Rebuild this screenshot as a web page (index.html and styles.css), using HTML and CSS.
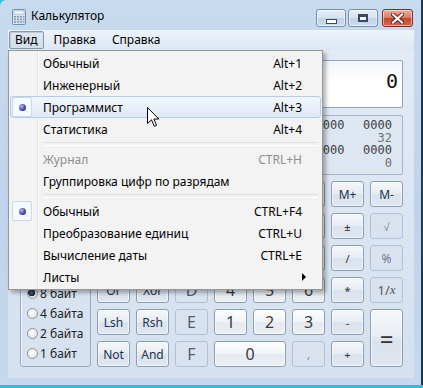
FILE: index.html
```html
<!DOCTYPE html>
<html lang="ru">
<head>
    <meta charset="UTF-8">
    <title>Калькулятор</title>
    <link rel="stylesheet" href="styles.css">
</head>
<body>
    <div class="window">
        <div class="titlebar">
            <svg class="app-icon" width="14" height="16" viewBox="0 0 14 16">
                <rect x="0.5" y="0.5" width="13" height="15" rx="1" fill="#d5e4f4" stroke="#6f8fb5"/>
                <rect x="2" y="2" width="10" height="3" fill="#fdfeff" stroke="#8ea7c6" stroke-width="0.6"/>
                <g fill="#8a98a8">
                    <rect x="2" y="7" width="2" height="1.6"/><rect x="5" y="7" width="2" height="1.6"/><rect x="8" y="7" width="2" height="1.6"/><rect x="11" y="7" width="1.5" height="1.6"/>
                    <rect x="2" y="9.6" width="2" height="1.6"/><rect x="5" y="9.6" width="2" height="1.6"/><rect x="8" y="9.6" width="2" height="1.6"/><rect x="11" y="9.6" width="1.5" height="1.6"/>
                    <rect x="2" y="12.2" width="2" height="1.6"/><rect x="5" y="12.2" width="2" height="1.6"/><rect x="8" y="12.2" width="2" height="1.6"/><rect x="11" y="12.2" width="1.5" height="1.6"/>
                </g>
            </svg>
            <span class="title">Калькулятор</span>
            <div class="caption">
                <div class="cap-btn"><span class="ico-min"></span></div>
                <div class="cap-btn"><span class="ico-max"></span></div>
                <div class="cap-btn close">
                    <svg width="13" height="11" viewBox="0 0 13 11">
                        <path d="M2 1.5 L11 9.5 M11 1.5 L2 9.5" stroke="#5a1d14" stroke-width="4" stroke-linecap="square"/>
                        <path d="M2 1.5 L11 9.5 M11 1.5 L2 9.5" stroke="#fff" stroke-width="2.2" stroke-linecap="square"/>
                    </svg>
                </div>
            </div>
        </div>

        <div class="menubar">
            <span class="menubar-item open">Вид</span>
            <span class="menubar-item">Правка</span>
            <span class="menubar-item">Справка</span>
        </div>

        <div class="client">
            <div class="display"><span>0</span></div>

            <div class="bits">
                <div class="bit-row"><span>0000</span><span>0000</span><span>0000</span><span>0000</span><span>0000</span><span>0000</span><span>0000</span><span>0000</span></div>
                <div class="bit-row labels"><span>63</span><span class="c5">47</span><span class="c8">32</span></div>
                <div class="bit-row"><span>0000</span><span>0000</span><span>0000</span><span>0000</span><span>0000</span><span>0000</span><span>0000</span><span>0000</span></div>
                <div class="bit-row labels"><span>31</span><span class="c5">15</span><span class="c8">0</span></div>
            </div>

            <div class="lower">
                <div class="panels">
                    <div class="group">
                        <div class="radio on"><i></i>Hex</div>
                        <div class="radio"><i></i>Dec</div>
                        <div class="radio"><i></i>Oct</div>
                        <div class="radio"><i></i>Bin</div>
                    </div>
                    <div class="group">
                        <div class="radio on"><i></i>8 байт</div>
                        <div class="radio"><i></i>4 байта</div>
                        <div class="radio"><i></i>2 байта</div>
                        <div class="radio"><i></i>1 байт</div>
                    </div>
                </div>

                <div class="keypad">
                    <div class="key">Quot</div><div class="key">Mod</div><div class="key off hex">A</div><div class="key">MC</div><div class="key">MR</div><div class="key">MS</div><div class="key">M+</div><div class="key">M-</div>
                    <div class="key">(</div><div class="key">)</div><div class="key off hex">B</div><div class="key">←</div><div class="key">CE</div><div class="key">C</div><div class="key op">±</div><div class="key off op">√</div>
                    <div class="key">RoL</div><div class="key">RoR</div><div class="key off hex">C</div><div class="key num">7</div><div class="key num">8</div><div class="key num">9</div><div class="key op">/</div><div class="key off">%</div>
                    <div class="key">Or</div><div class="key">Xor</div><div class="key off hex">D</div><div class="key num">4</div><div class="key num">5</div><div class="key num">6</div><div class="key op">*</div><div class="key off inv">1/<em>x</em></div>
                    <div class="key">Lsh</div><div class="key">Rsh</div><div class="key off hex">E</div><div class="key num">1</div><div class="key num">2</div><div class="key num">3</div><div class="key op">-</div><div class="key eq">=</div>
                    <div class="key">Not</div><div class="key">And</div><div class="key off hex">F</div><div class="key num zero">0</div><div class="key off op">,</div><div class="key op">+</div>
                </div>
            </div>
        </div>

        <!-- открытое меню "Вид" -->
        <div class="dropdown">
            <div class="menu-item"><span class="check"></span><span class="label">Обычный</span><span class="shortcut">Alt+1</span></div>
            <div class="menu-item"><span class="check"></span><span class="label">Инженерный</span><span class="shortcut">Alt+2</span></div>
            <div class="menu-item hot"><span class="check on"><b></b></span><span class="label">Программист</span><span class="shortcut">Alt+3</span></div>
            <div class="menu-item"><span class="check"></span><span class="label">Статистика</span><span class="shortcut">Alt+4</span></div>
            <div class="sep"></div>
            <div class="menu-item disabled"><span class="check"></span><span class="label">Журнал</span><span class="shortcut">CTRL+H</span></div>
            <div class="menu-item"><span class="check"></span><span class="label">Группировка цифр по разрядам</span></div>
            <div class="sep"></div>
            <div class="menu-item"><span class="check on"><b></b></span><span class="label">Обычный</span><span class="shortcut">CTRL+F4</span></div>
            <div class="menu-item"><span class="check"></span><span class="label">Преобразование единиц</span><span class="shortcut">CTRL+U</span></div>
            <div class="menu-item"><span class="check"></span><span class="label">Вычисление даты</span><span class="shortcut">CTRL+E</span></div>
            <div class="menu-item"><span class="check"></span><span class="label">Листы</span><span class="sub-arrow"></span></div>
        </div>

        <svg class="cursor" width="13" height="21" viewBox="0 0 13 21">
            <path d="M0.5 0.5 L0.5 16.5 L4.5 12.8 L7.3 19.3 L9.6 18.3 L6.9 12 L11.8 12 Z" fill="#fff" stroke="#000" stroke-width="1" stroke-linejoin="miter"/>
        </svg>
    </div>
</body>
</html>
```

FILE: styles.css
```css
* {
    box-sizing: border-box;
    margin: 0;
    padding: 0;
}

html, body {
    width: 423px;
    height: 388px;
    overflow: hidden;
}

body {
    background: #2cbfd7;
    font-family: "Noto Sans", "Liberation Sans", sans-serif;
    font-size: 12px;
    color: #000;
}

.window {
    position: relative;
    width: 421px;
    height: 385px;
    display: flex;
    flex-direction: column;
    padding: 0 7px 7px 8px;
    background: linear-gradient(to bottom, #c8daee, #bfd3ea 55%, #c6d8ed);
    border-top-left-radius: 6px;
    box-shadow: 2px 0 0 #1d3956;
}

/* заголовок окна */
.titlebar {
    height: 30px;
    display: flex;
    align-items: center;
}

.app-icon {
    margin: 3px 5px 0 4px;
}

.title {
    flex: 1;
    padding-top: 1px;
}

.caption {
    display: flex;
    gap: 2px;
    align-self: flex-start;
    margin-top: 9px;
    margin-right: 1px;
}

.cap-btn {
    width: 30px;
    height: 18px;
    border: 1px solid #7890ae;
    border-radius: 3px;
    background: linear-gradient(#e6eef8, #d7e3f1 50%, #c0d2e8 51%, #cddcee);
    box-shadow: inset 0 0 0 1px rgba(255,255,255,0.5);
    display: flex;
    align-items: center;
    justify-content: center;
}

.cap-btn.close {
    width: 31px;
    margin-left: 2px;
    border-color: #7b3025;
    background: linear-gradient(#eeaa9c, #dc7865 50%, #c8452f 51%, #d4694f);
}

.ico-min {
    width: 11px;
    height: 5px;
    margin-top: 6px;
    border: 1px solid #394a60;
    background: #fff;
}

.ico-max {
    width: 10px;
    height: 8px;
    border: 1px solid #394a60;
    border-top-width: 2px;
    background: #fff;
    box-shadow: inset 0 0 0 1px #394a60;
}

/* строка меню */
.menubar {
    height: 20px;
    display: flex;
    align-items: center;
    gap: 4px;
    padding-left: 1px;
    background: linear-gradient(#edf3fa, #dde7f3);
}

.menubar-item {
    padding: 0 5px;
    line-height: 16px;
    border: 1px solid transparent;
    border-radius: 2px;
}

.menubar-item.open {
    border-color: #8797ab;
    background: linear-gradient(#dfe7f1, #d3dee9);
    box-shadow: inset 1px 1px 0 #bcc9d8;
}

/* рабочая область */
.client {
    flex: 1;
    display: flex;
    flex-direction: column;
    padding: 10px 11px 0 12px;
    background: linear-gradient(#e2eaf5, #d5e1ef);
}

.display {
    height: 48px;
    display: flex;
    justify-content: flex-end;
    align-items: center;
    padding: 0 4px 7px;
    border: 1px solid #91a3b8;
    border-radius: 2px;
    background: linear-gradient(#f2f6fa, #fff 45%);
    font: 20px "DejaVu Sans Mono", monospace;
    color: #111;
}

.bits {
    height: 60px;
    margin-top: 7px;
    padding: 3px 10px 0;
    border: 1px solid #a6b6ca;
    border-radius: 2px;
    background: #dde6f1;
    font: 12px/12.6px "DejaVu Sans Mono", monospace;
    color: #3f3f3f;
}

.bit-row {
    display: grid;
    grid-template-columns: repeat(8, 29px);
    justify-content: space-between;
}

.bit-row.labels {
    color: #707070;
}

.bit-row .c5 {
    grid-column: 5;
}

.bit-row .c8 {
    grid-column: 8;
    justify-self: end;
}

.lower {
    display: flex;
    gap: 6px;
    margin-top: 6px;
}

.panels {
    width: 71px;
    display: flex;
    flex-direction: column;
    gap: 7px;
}

.group {
    height: 88px;
    padding: 6px 0 0 6px;
    border: 1px solid #99abc1;
    border-radius: 3px;
    box-shadow: inset 1px 1px 0 rgba(255,255,255,0.6);
}

.group + .group {
    height: 91px;
}

.radio {
    height: 20px;
    display: flex;
    align-items: center;
    gap: 2px;
    color: #222;
}

.radio i {
    width: 11px;
    height: 11px;
    border: 1px solid #8f9296;
    border-radius: 50%;
    background: radial-gradient(circle at 40% 40%, #fff, #e4e6e8 70%, #cfd2d6);
}

.radio.on i {
    background: radial-gradient(circle at 40% 40%, #4d5f79 0, #1b2738 45%, #d8dbe0 50%, #fff);
}

/* клавиатура */
.keypad {
    display: grid;
    grid-template-columns: repeat(8, 33px);
    grid-template-rows: repeat(6, 26px);
    gap: 6px;
}

.key {
    display: flex;
    align-items: center;
    justify-content: center;
    border: 1px solid #8c9eb4;
    border-radius: 3px;
    background: linear-gradient(#f5f7fa, #e8edf4 45%, #dae2ed 55%, #e0e7f0);
    box-shadow: inset 0 0 0 1px rgba(255,255,255,0.55);
    color: #1d3251;
    font-size: 12px;
}

.key.num {
    font-size: 16px;
    color: #3a3a3a;
    background: linear-gradient(#fcfdfe, #f2f5f8 45%, #e5eaf0 55%, #edf0f4);
}

.key.zero {
    grid-column: span 2;
}

.key.op {
    font-size: 11px;
    color: #333;
}

.key.eq {
    grid-row: span 2;
    font-size: 24px;
    color: #333;
}

.key.off {
    border-color: #b1c1d4;
    background: #d9e3ef;
    box-shadow: none;
    color: #6b7888;
}

.key.hex {
    font-size: 16px;
    color: #4f5d6d;
}

.key.inv {
    font-size: 13px;
    color: #555;
}

.key.inv em {
    font-family: "Liberation Serif", serif;
}

/* выпадающее меню */
.dropdown {
    position: absolute;
    left: 8px;
    top: 50px;
    width: 315px;
    padding: 1px;
    border: 1px solid #979797;
    background:
        linear-gradient(to right, transparent 28px, #e2e3e3 28px, #e2e3e3 29px, #fff 29px, #fff 30px, transparent 30px),
        #f3f3f3;
    box-shadow: 3px 3px 4px rgba(0,0,0,0.3);
}

.menu-item {
    height: 22px;
    display: flex;
    align-items: center;
    padding-right: 10px;
    border: 1px solid transparent;
    border-radius: 3px;
}

.menu-item.hot {
    border-color: #b4cdea;
    background: linear-gradient(#f3f7fd, #dfe9f8);
}

.menu-item.disabled {
    color: #8d8d8d;
}

.check {
    width: 20px;
    height: 20px;
    margin-left: 1px;
    display: flex;
    align-items: center;
    justify-content: center;
    border-radius: 2px;
}

.check.on {
    border: 1px solid #c4d8ef;
    background: #f6f9fd;
}

.check b {
    width: 7px;
    height: 7px;
    border-radius: 50%;
    background: radial-gradient(circle at 35% 35%, #b9bcf2, #444aa8 55%, #1e2063);
}

.label {
    flex: 1;
    margin-left: 11px;
}

.shortcut {
    margin-right: 8px;
}

.sub-arrow {
    width: 0;
    height: 0;
    margin-right: 4px;
    border-top: 4px solid transparent;
    border-bottom: 4px solid transparent;
    border-left: 4px solid #000;
}

.sep {
    height: 8px;
    display: flex;
    align-items: center;
    padding: 0 3px 0 33px;
}

.sep::after {
    content: "";
    flex: 1;
    height: 2px;
    border-top: 1px solid #e0e0e0;
    border-bottom: 1px solid #fff;
}

.cursor {
    position: absolute;
    left: 147px;
    top: 107px;
}
```
